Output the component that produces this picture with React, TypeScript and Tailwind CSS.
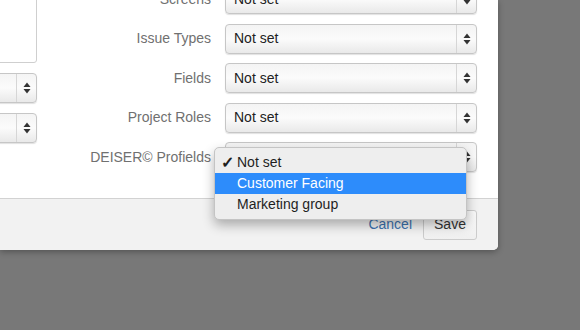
import React from "react";

function Arrows() {
  return (
    <svg width="8" height="12" viewBox="0 0 8 12" className="text-[#333]">
      <path d="M4 0.5 L7.5 5 L0.5 5 Z" fill="currentColor" />
      <path d="M4 11.5 L7.5 7 L0.5 7 Z" fill="currentColor" />
    </svg>
  );
}

function NativeSelect({ value, className = "" }: { value?: string; className?: string }) {
  return (
    <div
      className={`flex h-[30px] items-stretch rounded-[4px] border border-[#c6c6c6] bg-linear-to-b from-[#f4f4f4] via-[#fbfbfb] to-[#e9e9e9] shadow-[0_1px_1px_rgba(0,0,0,0.12)] ${className}`}
    >
      <div className="flex flex-1 items-center pl-[8px] text-[14px] text-[#222]">{value}</div>
      <div className="flex w-[20px] items-center justify-center border-l border-[#d6d6d6]">
        <Arrows />
      </div>
    </div>
  );
}

const rows = ["Screens", "Issue Types", "Fields", "Project Roles", "DEISER© Profields"];

export default function App() {
  return (
    <div className="relative h-[330px] w-[580px] overflow-hidden bg-[#787878] font-['Liberation_Sans',Arial,sans-serif]">
      <div className="flex h-[250px] w-[498px] flex-col overflow-hidden rounded-br-[5px] bg-white shadow-[0_2px_6px_rgba(0,0,0,0.3)]">
        <div className="flex-1 overflow-hidden">
          <div className="-mt-[16px] flex">
            {/* left column, cut off at the edge */}
            <div className="flex w-[37px] flex-col items-end">
              <div className="h-[79px] w-[80px] shrink-0 rounded-br-[3px] border border-[#cfcfcf] bg-white" />
              <NativeSelect className="mt-[10px] w-[80px] shrink-0" />
              <NativeSelect className="mt-[10px] w-[80px] shrink-0" />
            </div>

            {/* right form */}
            <div className="flex flex-col gap-[9.5px]">
              {rows.map((label, i) => {
                const focused = i === rows.length - 1;
                return (
                  <div key={label} className="flex h-[30px] items-center">
                    <div className="w-[174px] text-right text-[14px] text-[#707070]">{label}</div>
                    <NativeSelect
                      value={focused ? "" : "Not set"}
                      className={`ml-[14px] w-[252px] ${focused ? "shadow-[0_0_0_2px_#a8cdf6] border-[#8fb8e6]" : ""}`}
                    />
                  </div>
                );
              })}
            </div>
          </div>
        </div>

        <div className="flex h-[52px] items-center justify-end gap-[11px] border-t border-[#d2d2d2] bg-[#f2f2f2] pr-[21px]">
          <span className="text-[14px] text-[#3b73af]">Cancel</span>
          <button className="h-[30px] w-[54px] rounded-[3px] border border-[#cccccc] bg-linear-to-b from-[#fafafa] to-[#f0f0f0] text-[14px] text-[#333]">
            Save
          </button>
        </div>
      </div>

      {/* open dropdown menu */}
      <div className="absolute left-[214px] top-[147px] w-[253px] rounded-[5px] border border-[#c4c4c4] bg-[#eeeeee] py-[4px] text-[14px] text-[#1e1e1e] shadow-[0_5px_12px_rgba(0,0,0,0.3)]">
        <div className="flex h-[21px] items-center">
          <span className="w-[22px] pl-[6px] text-[16px] font-bold leading-none">✓</span>
          <span>Not set</span>
        </div>
        <div className="flex h-[21px] items-center bg-[#2d8cfb] text-white">
          <span className="w-[22px]" />
          <span>Customer Facing</span>
        </div>
        <div className="flex h-[21px] items-center">
          <span className="w-[22px]" />
          <span>Marketing group</span>
        </div>
      </div>
    </div>
  );
}
